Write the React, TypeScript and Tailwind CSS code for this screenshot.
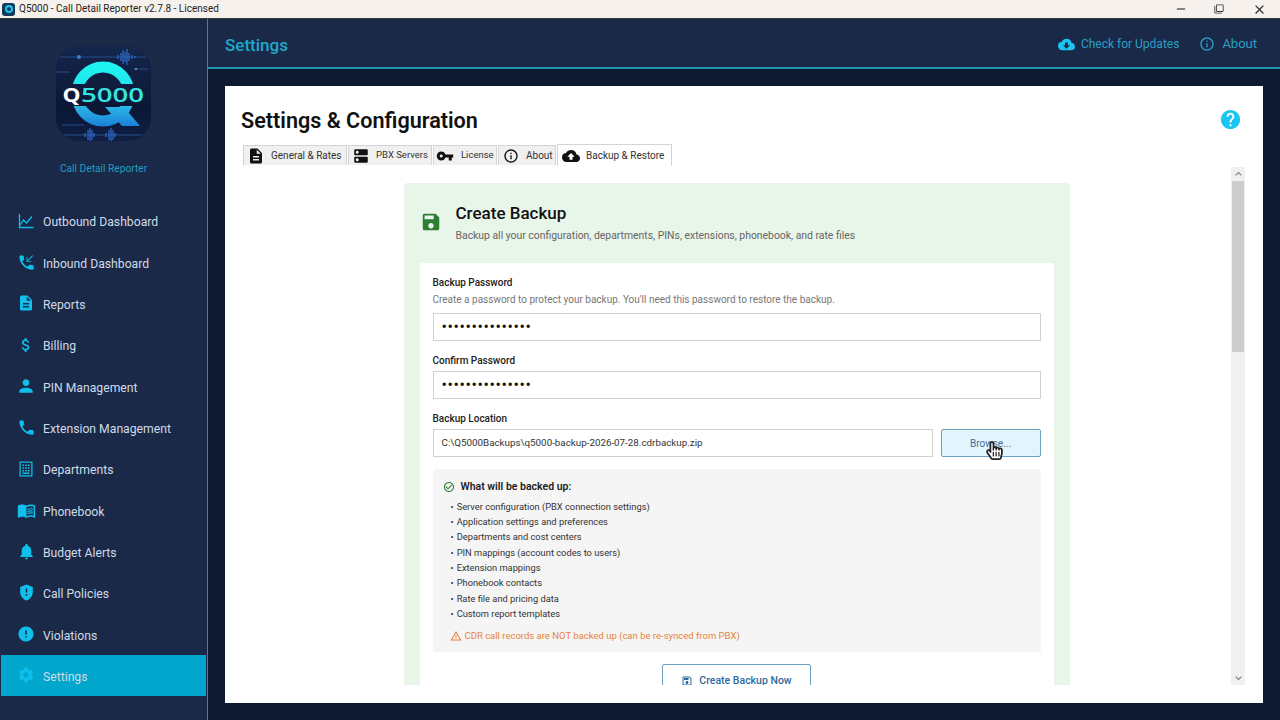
import React from "react";
import {
  MdPhoneCallback, MdDescription, MdAttachMoney, MdPerson, MdPhone, MdMenuBook, MdNotifications,
  MdGppMaybe, MdError, MdSettings, MdDns, MdVpnKey, MdInfoOutline, MdCloudUpload, MdCloudDownload,
  MdHelp, MdSave, MdCheckCircleOutline, MdWarningAmber, MdOutlineSave, MdClose, MdRemove, MdOutlineFilterNone,
  MdKeyboardArrowUp, MdKeyboardArrowDown,
} from "react-icons/md";
import { FaRegHandPointer, FaHandPointer } from "react-icons/fa";

function ChartIcon() {
  return (
    <svg width="16" height="16" viewBox="0 0 16 16" fill="none" stroke="currentColor" strokeWidth="1.3">
      <path d="M1.5 1v13.5H15.5" />
      <path d="M2 12l3.5-5 3 3L14 3.5" />
    </svg>
  );
}
function BuildingIcon() {
  return (
    <svg width="14" height="16" viewBox="0 0 14 16" fill="currentColor">
      <path fillRule="evenodd" d="M0.5 0.5h13v15h-13zM1.7 1.7v12.6h10.6V1.7z" />
      <path d="M3.5 3.5h1.6v1.6H3.5zM6.2 3.5h1.6v1.6H6.2zM8.9 3.5h1.6v1.6H8.9zM3.5 6.2h1.6v1.6H3.5zM6.2 6.2h1.6v1.6H6.2zM8.9 6.2h1.6v1.6H8.9zM3.5 8.9h1.6v1.6H3.5zM6.2 8.9h1.6v1.6H6.2zM8.9 8.9h1.6v1.6H8.9zM3.5 11.5h7v1.4h-7z" />
    </svg>
  );
}

function Logo() {
  return (
    <div className="w-[95px] h-[95px] rounded-[24px] overflow-hidden bg-[#0c1732]">
      <svg width="95" height="95" viewBox="0 0 95 95">
        <defs>
          <linearGradient id="top" x1="0" y1="0" x2="0" y2="1">
            <stop offset="0" stopColor="#1df4f0" />
            <stop offset="1" stopColor="#2cc4ea" />
          </linearGradient>
          <linearGradient id="low" gradientUnits="userSpaceOnUse" x1="0" y1="60" x2="0" y2="81">
            <stop offset="0" stopColor="#2cb8e8" />
            <stop offset="1" stopColor="#1a7ed6" />
          </linearGradient>
          <linearGradient id="bg" x1="0" y1="0" x2="0" y2="1">
            <stop offset="0" stopColor="#15274c" />
            <stop offset="0.65" stopColor="#0b1634" />
            <stop offset="1" stopColor="#101f44" />
          </linearGradient>
          <clipPath id="tc"><rect x="0" y="0" width="95" height="38" /></clipPath>
          <clipPath id="lc"><rect x="0" y="60" width="95" height="35" /></clipPath>
        </defs>
        <rect width="95" height="95" fill="url(#bg)" />
        <path d="M2 11H90M0 26H14M78 23H92M6 79H28M8 89H88" stroke="#2a5a9c" strokeWidth="0.8" />
        <circle cx="23" cy="11" r="2" fill="#3a7fc8" />
        <circle cx="80" cy="23" r="1" fill="#5ab0e0" />
        <path d="M62 9v4M65 7v8M67 4v14M69 6v10M71 3v16M73 7v8M76 9v4M79 10v2M29 87v4M32 84v10M34 82v14M36 84v10M38 87v4M50 87v4M53 84v10M55 82v14M57 84v10M59 87v4" stroke="#2f6fd0" strokeWidth="1.2" />
        <g fill="none" strokeWidth="11">
          <ellipse cx="47" cy="48" rx="26" ry="27" stroke="url(#top)" clipPath="url(#tc)" />
          <ellipse cx="47" cy="48" rx="26" ry="27" stroke="url(#low)" clipPath="url(#lc)" />
        </g>
        <path d="M49 61H68L84 80H66Z" fill="url(#low)" />
        <text x="6.5" y="55.5" textLength="18" lengthAdjust="spacingAndGlyphs" fontFamily="'Open Sans',sans-serif" fontWeight="700" fontSize="20" fill="#ffffff">Q</text>
        <text x="25" y="55.5" textLength="63" lengthAdjust="spacingAndGlyphs" fontFamily="'Open Sans',sans-serif" fontWeight="600" fontSize="20" fill="#35e3e0">5000</text>
      </svg>
    </div>
  );
}

const nav: [React.ReactNode, string][] = [
  [<ChartIcon />, "Outbound Dashboard"],
  [<MdPhoneCallback size={19} />, "Inbound Dashboard"],
  [<MdDescription size={18} />, "Reports"],
  [<MdAttachMoney size={18} />, "Billing"],
  [<MdPerson size={20} />, "PIN Management"],
  [<MdPhone size={19} />, "Extension Management"],
  [<BuildingIcon />, "Departments"],
  [<MdMenuBook size={19} />, "Phonebook"],
  [<MdNotifications size={19} />, "Budget Alerts"],
  [<MdGppMaybe size={19} />, "Call Policies"],
  [<MdError size={18} />, "Violations"],
  [<MdSettings size={18} />, "Settings"],
];

const tabs: [React.ReactNode, string, string][] = [
  [<MdDescription size={18} />, "General & Rates", "w-[104px] pl-[3px] gap-[6px] text-[10px]"],
  [<MdDns size={18} />, "PBX Servers", "w-[84px] pl-[3px] gap-[6px] text-[9.5px]"],
  [<MdVpnKey size={18} />, "License", "w-[64px] pl-[2px] gap-[7px] text-[9.5px]"],
  [<MdInfoOutline size={16} />, "About", "w-[58px] pl-[4px] gap-[7px] text-[10px]"],
];

const backedUp = [
  "Server configuration (PBX connection settings)",
  "Application settings and preferences",
  "Departments and cost centers",
  "PIN mappings (account codes to users)",
  "Extension mappings",
  "Phonebook contacts",
  "Rate file and pricing data",
  "Custom report templates",
];

function Field({ children }: { children: React.ReactNode }) {
  return (
    <div className="h-7 flex-1 border border-[#cfcfcf] bg-white flex items-center px-2 text-[9.8px] text-[#333]">
      {children}
    </div>
  );
}
const dots = "•••••••••••••••";

export default function App() {
  return (
    <div className="w-[1280px] h-[720px] overflow-hidden flex flex-col bg-[#0e1a30] font-['Roboto',sans-serif]">
      <div className="h-[19px] shrink-0 bg-[#f6f1ec] border-b border-[#3a3a3a] flex items-center text-[#222]">
        <div className="w-[13px] h-[13px] ml-[2px] rounded-[3px] bg-[#123a5c] flex items-center justify-center">
          <div className="w-[8px] h-[8px] rounded-full border-2 border-[#25c5e8]" />
        </div>
        <span className="ml-1 text-[10px] leading-none">Q5000 - Call Detail Reporter v2.7.8 - Licensed</span>
        <div className="ml-auto flex items-center text-[#333]">
          <MdRemove size={14} className="mr-[26px]" />
          <MdOutlineFilterNone size={10} className="mr-[28px]" />
          <MdClose size={15} className="mr-[13px]" />
        </div>
      </div>
      <div className="flex-1 flex min-h-0">
        <aside className="w-[208px] shrink-0 bg-[#1a2947] border-r border-[#2090b5] flex flex-col">
          <div className="flex justify-center pt-[27px]">
            <Logo />
          </div>
          <div className="mt-[21px] text-center text-[10.2px] leading-[14px] text-[#1e9ec2]">Call Detail Reporter</div>
          <nav className="mt-[24px] pl-px pr-px flex flex-col">
            {nav.map(([icon, label]) => {
              const active = label === "Settings";
              return (
                <div key={label} className={`h-[41.35px] flex items-center ${active ? "bg-[#00a6cc]" : ""}`}>
                  <span className="w-[42px] flex justify-center pl-[8px] text-[#0fc0ec]">{icon}</span>
                  <span className="text-[12.2px] leading-[18px] mt-[3px] text-[#cfdbe8]">{label}</span>
                </div>
              );
            })}
          </nav>
        </aside>
        <div className="flex-1 flex flex-col min-w-0">
          <header className="h-[50px] shrink-0 bg-[#1a2947] border-b-2 border-[#2090b5] flex items-center pl-[17px] pr-[23px]">
            <span className="text-[17px] font-medium mt-[5px] text-[#20a6cd]">Settings</span>
            <div className="ml-auto flex items-center mt-[2px] text-[#2a9fc5]">
              <MdCloudDownload size={17} className="text-[#1cc4ee] mr-[6px]" />
              <span className="text-[12px]">Check for Updates</span>
              <MdInfoOutline size={16} className="ml-[20px] mr-[7px]" />
              <span className="text-[13px]">About</span>
            </div>
          </header>
          <main className="flex-1 min-h-0 pt-[17px] pl-[17px] pr-[17px] pb-[17px]">
            <div className="h-full bg-white flex flex-col pl-4 pr-[18px]">
              <div className="pt-[20px] flex items-center justify-between">
                <h1 className="text-[21.6px] leading-[30px] font-semibold text-[#111]">Settings &amp; Configuration</h1>
                <MdHelp size={23} className="text-[#19c5f3] -mt-[3px] mr-[3px]" />
              </div>
              <div className="mt-[8px] ml-[2px] flex items-end h-[22px]">
                {tabs.map(([icon, label, c]) => (
                  <div key={label} className={`${c} h-5 mb-px shrink-0 mr-px bg-[#f0f0f0] border border-[#d4d4d4] border-b-0 flex items-center text-[#333] whitespace-nowrap`}>
                    <span className="text-[#111]">{icon}</span>
                    {label}
                  </div>
                ))}
                <div className="w-[115px] h-[22px] shrink-0 bg-white border border-[#d4d4d4] border-b-0 flex items-center pl-[4px] gap-[6px] text-[10px] text-[#333] whitespace-nowrap">
                  <MdCloudUpload size={18} className="text-[#111]" />
                  Backup &amp; Restore
                </div>
              </div>
              <div className="mt-[1px] flex-1 min-h-0 max-h-[518px] flex">
                <div className="flex-1 min-w-0 overflow-hidden flex justify-center pt-4 pl-px">
                  <section className="w-[666px] shrink-0 h-fit rounded-[4px] bg-[#e8f5e9] px-4 pt-[14px] pb-4">
                    <div className="flex items-center gap-[14px] h-[66px] -mt-[3px] pb-[11px]">
                      <MdSave size={22} className="text-[#2e7d32]" />
                      <div>
                        <h2 className="text-[17px] leading-[24px] font-medium text-[#111]">Create Backup</h2>
                        <p className="mt-[4px] text-[10.4px] leading-[14px] text-[#666]">Backup all your configuration, departments, PINs, extensions, phonebook, and rate files</p>
                      </div>
                    </div>
                    <div className="mt-[3px] bg-white rounded-[2px] pl-[13px] pr-[13px] pt-[13px] pb-4">
                      <label className="block text-[10px] leading-[14px] font-medium text-[#222]">Backup Password</label>
                      <p className="mt-[3px] text-[10px] leading-[14px] text-[#777]">Create a password to protect your backup. You'll need this password to restore the backup.</p>
                      <div className="mt-[6px] flex"><Field><span className="text-[16px] text-[#111] tracking-[0.6px]">{dots}</span></Field></div>
                      <label className="block mt-[13px] text-[10px] leading-[14px] font-medium text-[#222]">Confirm Password</label>
                      <div className="mt-[3px] flex"><Field><span className="text-[16px] text-[#111] tracking-[0.6px]">{dots}</span></Field></div>
                      <label className="block mt-[13px] text-[10px] leading-[14px] font-medium text-[#222]">Backup Location</label>
                      <div className="mt-[3px] flex gap-2">
                        <Field>C:\Q5000Backups\q5000-backup-2026-07-28.cdrbackup.zip</Field>
                        <div className="relative w-[100px] h-7 shrink-0 rounded-[2px] border border-[#6f9fc0] bg-[#e3f5fc] flex items-center justify-center text-[10px] text-[#3d6f9c]">
                          Browse...
                          <FaHandPointer size={19} className="absolute left-[43px] top-[11px] text-white" />
                          <FaRegHandPointer size={19} className="absolute left-[43px] top-[11px] text-[#222]" />
                        </div>
                      </div>
                      <div className="mt-3 bg-[#f5f5f5] rounded-[2px] pl-[10px] pt-[10px] h-[183px]">
                        <div className="flex items-center gap-[6px] text-[10.5px] leading-[16px] font-semibold text-[#222]">
                          <MdCheckCircleOutline size={12} className="text-[#2e7d32]" />
                          What will be backed up:
                        </div>
                        <ul className="mt-[4px] pl-[8px]">
                          {backedUp.map((t) => (
                            <li key={t} className="h-[15.35px] flex items-center text-[9.3px] text-[#333]">
                              <span className="mr-[3px]">•</span>{t}
                            </li>
                          ))}
                        </ul>
                        <div className="mt-[7px] pl-[7px] flex items-center gap-[3px] text-[9.5px] leading-[14px] text-[#e8833a]">
                          <MdWarningAmber size={12} />
                          CDR call records are NOT backed up (can be re-synced from PBX)
                        </div>
                      </div>
                      <div className="mt-3 flex justify-center">
                        <div className="w-[149px] h-[34px] rounded-[2px] border border-[#6f9fc0] bg-white flex items-center justify-center gap-[6px] text-[10.5px] font-medium text-[#2f6aa0]">
                          <MdOutlineSave size={12} />
                          Create Backup Now
                        </div>
                      </div>
                    </div>
                  </section>
                </div>
                <div className="w-[14px] shrink-0 bg-[#f0f0f0] flex flex-col items-center relative">
                  <MdKeyboardArrowUp size={13} className="text-[#777] h-[14px]" />
                  <div className="w-[12px] h-[171px] bg-[#cdcdcd]" />
                  <MdKeyboardArrowDown size={13} className="text-[#777] mt-auto h-[14px]" />
                </div>
              </div>
            </div>
          </main>
        </div>
      </div>
    </div>
  );
}
